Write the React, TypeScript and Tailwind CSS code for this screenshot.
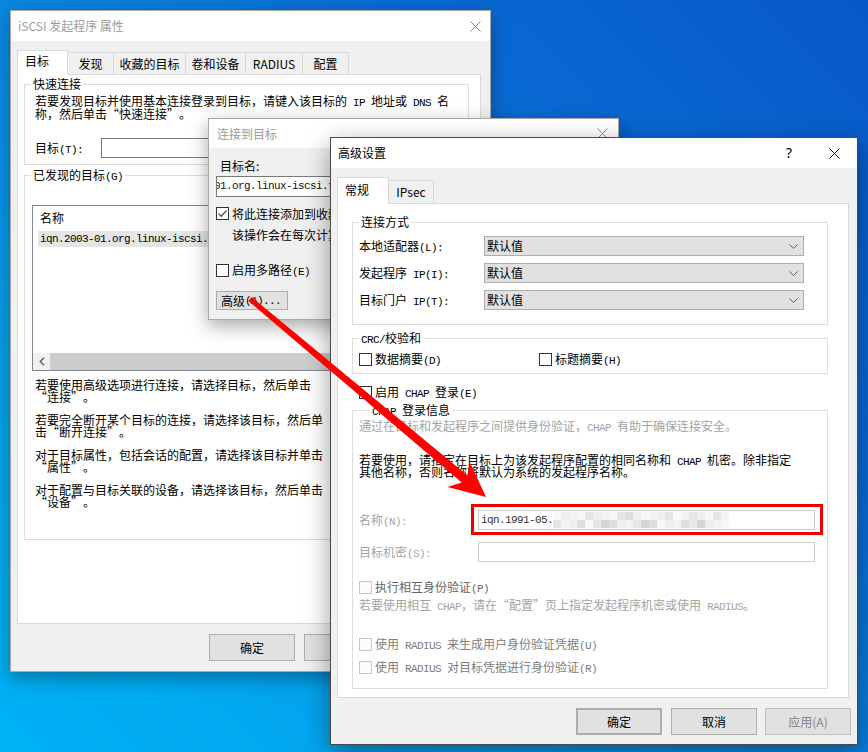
import React from "react";

const MONO = "font-['Liberation_Mono','DejaVu_Sans_Mono',monospace] text-[11px] tracking-[-0.6px]";

// Runs of ASCII are set in a narrow monospace face, CJK in the sans face;
// curly quotes get a full em cell like the rest of the CJK text.
function Tx({ s }: { s: string }) {
  const parts = s.split(/([\x20-\x7e]+|[“”])/);
  return (
    <>
      {parts.map((p, i) => {
        if (p === "") return null;
        if (p === "“")
          return (
            <span key={i} className="inline-block w-[12px] text-right">
              “
            </span>
          );
        if (p === "”")
          return (
            <span key={i} className="inline-block w-[12px] text-left">
              ”
            </span>
          );
        if (/^[\x20-\x7e]+$/.test(p))
          return (
            <span key={i} className={`${MONO} whitespace-pre`}>
              {p}
            </span>
          );
        return <React.Fragment key={i}>{p}</React.Fragment>;
      })}
    </>
  );
}

function CloseX({ color }: { color: string }) {
  return (
    <svg width="11" height="11" viewBox="0 0 11 11" className="shrink-0">
      <path d="M0.5 0.5L10.5 10.5M10.5 0.5L0.5 10.5" stroke={color} strokeWidth="1" fill="none" />
    </svg>
  );
}

function Box({ checked, disabled }: { checked?: boolean; disabled?: boolean }) {
  return (
    <span
      className={`relative flex w-[13px] h-[13px] shrink-0 items-center justify-center border ${
        disabled ? "border-[#c6c6c6] bg-[#fcfcfc]" : "border-[#333333] bg-white"
      }`}
    >
      {checked && (
        <svg width="11" height="11" viewBox="0 0 11 11">
          <path d="M1.5 5.5L4.2 8.2L9.5 2.5" stroke="#555555" strokeWidth="1.3" fill="none" />
        </svg>
      )}
    </span>
  );
}

function CheckRow({
  text,
  checked,
  disabled,
  tone,
  className,
}: {
  text: string;
  checked?: boolean;
  disabled?: boolean;
  tone?: string;
  className?: string;
}) {
  return (
    <div className={`flex items-center h-[13px] gap-[3px] whitespace-nowrap ${className ?? ""}`}>
      <Box checked={checked} disabled={disabled} />
      <span className={`h-[14px] leading-[14px] flex items-center ${tone ?? ""}`}>
        <span>
          <Tx s={text} />
        </span>
      </span>
    </div>
  );
}

function Line({ text, h, className }: { text: string; h: string; className?: string }) {
  return (
    <div className={`${h} whitespace-nowrap ${className ?? ""}`}>
      <Tx s={text} />
    </div>
  );
}

function Group({
  legend,
  className,
  legendClass,
  children,
}: {
  legend: string;
  className: string;
  legendClass?: string;
  children: React.ReactNode;
}) {
  return (
    <fieldset className={`border border-[#dcdcdc] ${className}`}>
      <legend className={`${legendClass ?? "ml-[6px]"} h-[14px] px-[2px] leading-[14px] whitespace-nowrap`}>
        <Tx s={legend} />
      </legend>
      {children}
    </fieldset>
  );
}

function Tab({ w, children }: { w: string; children: React.ReactNode }) {
  return (
    <div
      className={`${w} h-[22px] flex items-center justify-center border border-l-0 border-b-0 border-[#d9d9d9] bg-[#f0f0f0] leading-[16px] whitespace-nowrap`}
    >
      {children}
    </div>
  );
}

function Btn({ children, className }: { children: React.ReactNode; className?: string }) {
  return (
    <div
      className={`w-[86px] h-[27px] flex items-center justify-center border border-[#adadad] bg-[#e1e1e1] leading-[16px] ${className ?? ""}`}
    >
      {children}
    </div>
  );
}

function Chevron() {
  return (
    <svg width="9" height="5" viewBox="0 0 9 5">
      <path d="M0.5 0.5L4.5 4.5L8.5 0.5" stroke="#5a5a5a" strokeWidth="1" fill="none" />
    </svg>
  );
}

function Select({ label }: { label: string }) {
  return (
    <div className="flex items-center h-[20px]">
      <div className="w-[125px] h-[14px] leading-[14px] whitespace-nowrap">
        <Tx s={label} />
      </div>
      <div className="w-[320px] h-[20px] flex items-center justify-between bg-[#e1e1e1] border border-[#adadad] pl-[2px] pr-[5px] leading-[14px]">
        <span>默认值</span>
        <Chevron />
      </div>
    </div>
  );
}

const SHADES = ["bg-[#f8f8f8]", "bg-[#eeeeee]", "bg-[#e6e6e6]", "bg-[#dedede]", "bg-[#f3f3f3]", "bg-[#d6d6d6]"];
const ROW_A = "0140214023104120421024";
const ROW_B = "2413025314253014325140";

function Mosaic() {
  return (
    <div className="flex flex-col">
      {[ROW_A, ROW_B].map((row, r) => (
        <div key={r} className="flex">
          {row.split("").map((c, i) => (
            <span key={i} className={`w-[8px] h-[8px] ${SHADES[Number(c)]}`} />
          ))}
        </div>
      ))}
    </div>
  );
}

function PropertiesWindow() {
  const notes: [string, string][] = [
    ["若要使用高级选项进行连接，请选择目标，然后单击", "“连接”。"],
    ["若要完全断开某个目标的连接，请选择该目标，然后单", "击“断开连接”。"],
    ["对于目标属性，包括会话的配置，请选择该目标并单击", "“属性”。"],
    ["对于配置与目标关联的设备，请选择该目标，然后单击", "“设备”。"],
  ];
  return (
    <div className="absolute left-[10px] top-[10px] w-[481px] h-[662px] flex flex-col border border-[#a9a9a9] bg-[#f0f0f0] shadow-[0_6px_18px_rgba(0,0,0,0.35)]">
      <div className="h-[30px] shrink-0 bg-white flex items-center justify-between pl-[7px] pr-[9px]">
        <span className="leading-[16px] text-[#9c9c9c]">iSCSI 发起程序 属性</span>
        <CloseX color="#8c8c8c" />
      </div>
      <div className="flex flex-col pl-[6px] pt-[9px]">
        <div className="flex items-end h-[24px]">
          <div className="relative z-10 h-[25px] w-[51px] -mb-px bg-white border border-b-0 border-[#d9d9d9] pl-[7px] pt-[2px] leading-[16px]">
            目标
          </div>
          <Tab w="w-[46px]">发现</Tab>
          <Tab w="w-[72px]">收藏的目标</Tab>
          <Tab w="w-[60px]">卷和设备</Tab>
          <Tab w="w-[57px]">RADIUS</Tab>
          <Tab w="w-[46px]">配置</Tab>
        </div>
        <div className="w-[464px] h-[550px] bg-white border border-[#d9d9d9] flex flex-col">
          <Group legend="快速连接" className="mt-[2px] ml-[6px] w-[445px]">
            <div className="flex flex-col pl-[10px] pt-[3px] pb-[6px] leading-[13px]">
              <Line h="h-[13px]" text="若要发现目标并使用基本连接登录到目标，请键入该目标的 IP 地址或 DNS 名" />
              <Line h="h-[13px]" text="称，然后单击“快速连接”。" />
              <div className="mt-[18px] flex items-center h-[20px]">
                <div className="w-[66px] h-[14px] leading-[14px]">
                  <Tx s="目标(T):" />
                </div>
                <div className="w-[280px] h-[20px] bg-white border border-[#7a7a7a]" />
              </div>
            </div>
          </Group>
          <Group legend="已发现的目标(G)" className="mt-[3px] ml-[6px] w-[445px]">
            <div className="flex flex-col pl-[7px] pb-[31px]">
              <div className="mt-[23px] w-[429px] h-[166px] border border-[#828790] flex flex-col">
                <div className="h-[25px] pl-[7px] pt-[5px] leading-[14px]">名称</div>
                <div className="ml-[5px] w-[300px] h-[16px] bg-[#e5e5e5] pl-[2px] flex items-center whitespace-nowrap overflow-hidden">
                  <span className={MONO}>iqn.2003-01.org.linux-iscsi.target:sn.01</span>
                </div>
                <div className="flex-1" />
                <div className="h-[17px] flex bg-[#f0f0f0]">
                  <div className="w-[17px] h-[17px] flex items-center justify-center">
                    <svg width="6" height="9" viewBox="0 0 6 9">
                      <path d="M5 0.8L1.2 4.5L5 8.2" stroke="#606060" strokeWidth="1.4" fill="none" />
                    </svg>
                  </div>
                  <div className="w-[320px] h-[17px] bg-[#cdcdcd]" />
                </div>
              </div>
              <div className="ml-[3px] mt-[8px] flex flex-col gap-[11px] leading-[12px]">
                {notes.map(([a, b]) => (
                  <div key={a} className="flex flex-col">
                    <Line h="h-[12px]" text={a} />
                    <Line h="h-[12px]" text={b} />
                  </div>
                ))}
              </div>
            </div>
          </Group>
        </div>
        <div className="mt-[10px] flex gap-[9px] pl-[192px]">
          <Btn>确定</Btn>
          <Btn>取消</Btn>
          <Btn>应用(A)</Btn>
        </div>
      </div>
    </div>
  );
}

function ConnectWindow() {
  return (
    <div className="absolute left-[208px] top-[118px] w-[411px] h-[202px] flex flex-col border border-[#a9a9a9] bg-[#f0f0f0] shadow-[0_6px_18px_rgba(0,0,0,0.35)]">
      <div className="h-[29px] shrink-0 bg-white flex items-center justify-between pl-[8px] pr-[10px]">
        <span className="leading-[16px] text-[#9c9c9c]">连接到目标</span>
        <CloseX color="#8c8c8c" />
      </div>
      <div className="flex flex-col pl-[7px] pt-[11px]">
        <div className="ml-[4px] h-[14px] leading-[14px]">目标名:</div>
        <div className="mt-[3px] w-[380px] h-[21px] bg-white border border-[#7a7a7a] overflow-hidden flex items-center">
          <span className={`${MONO} -ml-[3px] whitespace-nowrap text-[#111111]`}>01.org.linux-iscsi.target:sn.01</span>
        </div>
        <CheckRow className="mt-[10px]" checked text="将此连接添加到收藏目标列表。" />
        <div className="mt-[8px] pl-[16px] h-[14px] leading-[14px] whitespace-nowrap">该操作会在每次计算机重新启动时尝试还原连接。</div>
        <CheckRow className="mt-[22px]" text="启用多路径(E)" />
        <div className="mt-[14px] w-[72px] h-[19px] flex items-center pl-[4px] border border-[#adadad] bg-[#e1e1e1] leading-[14px] whitespace-nowrap">
          <Tx s="高级(A)..." />
        </div>
      </div>
    </div>
  );
}

function AdvancedWindow() {
  return (
    <div className="absolute left-[330px] top-[137px] w-[528px] h-[608px] flex flex-col border border-[#4a4a4a] bg-[#f0f0f0] shadow-[0_8px_24px_rgba(0,0,0,0.4)]">
      <div className="h-[30px] shrink-0 bg-white flex items-center pl-[7px]">
        <span className="leading-[16px]">高级设置</span>
        <div className="ml-auto w-[46px] flex justify-center text-[14px] leading-[16px] font-['Noto_Sans',sans-serif]">?</div>
        <div className="w-[45px] flex justify-center">
          <CloseX color="#111111" />
        </div>
      </div>
      <div className="flex flex-col pl-[6px] pt-[9px]">
        <div className="flex items-end h-[26px]">
          <div className="relative z-10 h-[27px] w-[52px] -mb-px bg-white border border-b-0 border-[#d9d9d9] pl-[7px] pt-[4px] leading-[16px]">
            常规
          </div>
          <div className="w-[45px] h-[23px] flex items-center justify-center border border-l-0 border-b-0 border-[#d9d9d9] bg-[#f0f0f0] leading-[16px]">
            IPsec
          </div>
        </div>
        <div className="w-[512px] h-[495px] bg-white border border-[#d9d9d9] flex flex-col">
          <Group legend="连接方式" className="mt-[11px] ml-[14px] w-[476px]">
            <div className="flex flex-col gap-[7px] pl-[6px] pt-[7px] pb-[14px]">
              <Select label="本地适配器(L):" />
              <Select label="发起程序 IP(I):" />
              <Select label="目标门户 IP(T):" />
            </div>
          </Group>
          <Group legend="CRC/校验和" className="mt-[6px] ml-[14px] w-[476px]">
            <div className="flex pl-[6px] pt-[8px] pb-[7px]">
              <CheckRow className="w-[180px]" text="数据摘要(D)" />
              <CheckRow text="标题摘要(H)" />
            </div>
          </Group>
          <CheckRow className="mt-[12px] ml-[21px]" text="启用 CHAP 登录(E)" />
          <Group legend="CHAP 登录信息" legendClass="ml-[17px]" className="mt-[4px] ml-[14px] w-[476px]">
            <div className="flex flex-col pl-[6px] pt-[3px] pb-[14px] leading-[12px]">
              <Line
                h="h-[12px]"
                className="text-[#a3a3a3]"
                text="通过在目标和发起程序之间提供身份验证，CHAP 有助于确保连接安全。"
              />
              <Line
                h="h-[12px]"
                className="mt-[22px]"
                text="若要使用，请指定在目标上为该发起程序配置的相同名称和 CHAP 机密。除非指定"
              />
              <Line h="h-[12px]" text="其他名称，否则名称将默认为系统的发起程序名称。" />
              <div className="mt-[32px] flex items-center h-[20px]">
                <div className="w-[119px] h-[14px] leading-[14px] text-[#a3a3a3]">
                  <Tx s="名称(N):" />
                </div>
                <div className="relative w-[337px] h-[20px] bg-white border border-[#cccccc] flex items-center pl-[2px]">
                  <span className={`${MONO} text-[#333333] whitespace-nowrap`}>iqn.1991-05.</span>
                  <Mosaic />
                  <div className="absolute -left-[8px] -right-[9px] -top-[7px] -bottom-[6px] border-[3px] border-[#ee0000]" />
                </div>
              </div>
              <div className="mt-[12px] flex items-center h-[20px]">
                <div className="w-[119px] h-[14px] leading-[14px] text-[#a3a3a3]">
                  <Tx s="目标机密(S):" />
                </div>
                <div className="w-[337px] h-[20px] bg-white border border-[#cccccc]" />
              </div>
              <CheckRow className="mt-[19px]" disabled tone="text-[#666666]" text="执行相互身份验证(P)" />
              <Line
                h="h-[12px]"
                className="mt-[5px] text-[#a3a3a3]"
                text="若要使用相互 CHAP，请在“配置”页上指定发起程序机密或使用 RADIUS。"
              />
              <CheckRow className="mt-[27px]" disabled tone="text-[#7d7d7d]" text="使用 RADIUS 来生成用户身份验证凭据(U)" />
              <CheckRow className="mt-[10px]" disabled tone="text-[#7d7d7d]" text="使用 RADIUS 对目标凭据进行身份验证(R)" />
            </div>
          </Group>
        </div>
        <div className="mt-[10px] flex justify-end pr-[6px]">
          <Btn className="mr-[9px] border-2 border-[#0078d7]">确定</Btn>
          <Btn className="mr-[8px]">取消</Btn>
          <Btn className="bg-[#cccccc] border-[#bfbfbf] text-[#838383]">应用(A)</Btn>
        </div>
      </div>
    </div>
  );
}

function Arrow() {
  return (
    <svg className="absolute inset-0 z-50 pointer-events-none" width="868" height="752" viewBox="0 0 868 752">
      <polygon
        points="248.4,300.9 461.7,482.4 447.5,486.9 486,497 469.3,460.9 467.5,475.6 251.6,297.1"
        fill="#ff0000"
      />
    </svg>
  );
}

export default function App() {
  return (
    <div
      lang="zh-CN"
      className="relative w-[868px] h-[752px] overflow-hidden bg-[linear-gradient(225deg,#0758c7_0%,#0a6bd4_30%,#0a8de2_58%,#02a8ef_82%,#00b2f5_100%)] font-['Noto_Sans_CJK_SC','Noto_Sans',sans-serif] text-[12px] text-black"
    >
      <PropertiesWindow />
      <ConnectWindow />
      <AdvancedWindow />
      <Arrow />
    </div>
  );
}
